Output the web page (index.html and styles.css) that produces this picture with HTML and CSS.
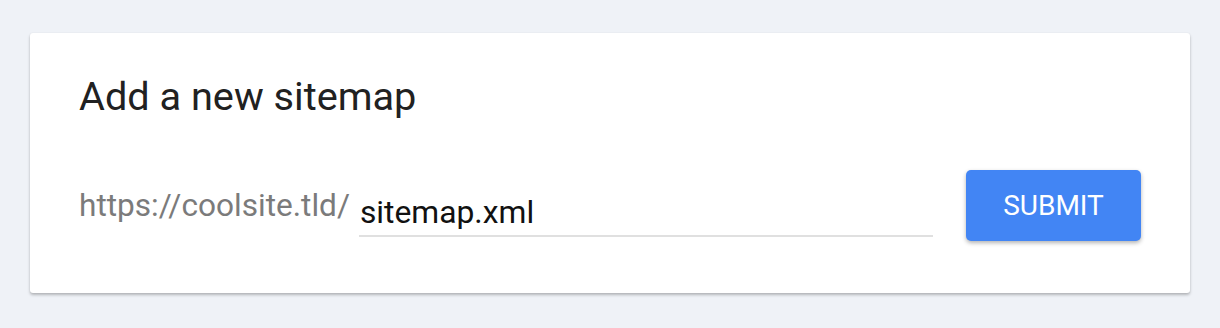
FILE: index.html
```html
<!DOCTYPE html>
<html>
<head>
<meta charset="utf-8">
<link rel="stylesheet" href="styles.css">
</head>
<body>
<div class="page">
  <div class="card">
    <h1 class="title">Add a new sitemap</h1>
    <div class="row">
      <span class="prefix">https://coolsite.tld/</span>
      <div class="field"><span class="value">sitemap.xml</span></div>
      <button class="submit">SUBMIT</button>
    </div>
  </div>
</div>
</body>
</html>
```
FILE: styles.css
```css
html, body {
  margin: 0;
  padding: 0;
  background: #eff2f7;
  font-family: Roboto, "Liberation Sans", sans-serif;
}
.page {
  padding: 33px 30px 35px 30px;
}
.card {
  background: #fff;
  border-radius: 3px;
  box-shadow: 0 2px 3px rgba(0,0,0,0.25), 0 0 2px rgba(0,0,0,0.06);
  height: 260px;
  box-sizing: border-box;
  padding: 39px 49px 0 49px;
}
.title {
  margin: 0;
  font-weight: 400;
  font-size: 39.7px;
  line-height: 50px;
  color: #212121;
}
.row {
  display: flex;
  align-items: center;
  margin-top: 48px;
}
.prefix {
  font-size: 31.6px;
  color: #7b7b7b;
  line-height: 40px;
  margin-right: 9px;
}
.field {
  width: 574px;
  border-bottom: 2px solid #e0e0e0;
  padding-top: 20px;
  padding-bottom: 5px;
}
.value {
  font-size: 31.8px;
  line-height: 36px;
  color: #111;
  display: block;
  padding-left: 1px;
}
.submit {
  margin-left: auto;
  width: 175px;
  height: 71px;
  background: #4285f4;
  color: #fff;
  border: none;
  border-radius: 5px;
  font-family: Roboto, "Liberation Sans", sans-serif;
  font-size: 28px;
  font-weight: 400;
  box-shadow: 0 2px 4px rgba(0,0,0,0.3);
}
```
